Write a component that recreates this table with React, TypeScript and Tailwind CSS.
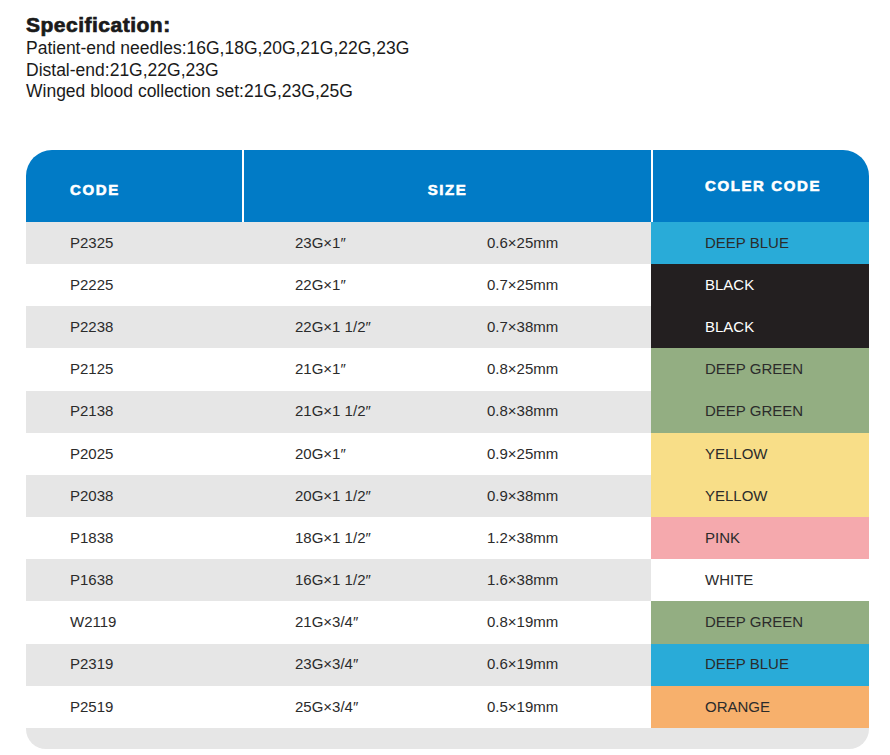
const rows = [
  { code: 'P2325', size: '23G×1″', mm: '0.6×25mm', color: 'DEEP BLUE', bg: 'bg-[#29abd8]', text: 'text-[#2b2b2b]' },
  { code: 'P2225', size: '22G×1″', mm: '0.7×25mm', color: 'BLACK', bg: 'bg-[#231f20]', text: 'text-white' },
  { code: 'P2238', size: '22G×1 1/2″', mm: '0.7×38mm', color: 'BLACK', bg: 'bg-[#231f20]', text: 'text-white' },
  { code: 'P2125', size: '21G×1″', mm: '0.8×25mm', color: 'DEEP GREEN', bg: 'bg-[#93ae82]', text: 'text-[#2b2b2b]' },
  { code: 'P2138', size: '21G×1 1/2″', mm: '0.8×38mm', color: 'DEEP GREEN', bg: 'bg-[#93ae82]', text: 'text-[#2b2b2b]' },
  { code: 'P2025', size: '20G×1″', mm: '0.9×25mm', color: 'YELLOW', bg: 'bg-[#f8de88]', text: 'text-[#2b2b2b]' },
  { code: 'P2038', size: '20G×1 1/2″', mm: '0.9×38mm', color: 'YELLOW', bg: 'bg-[#f8de88]', text: 'text-[#2b2b2b]' },
  { code: 'P1838', size: '18G×1 1/2″', mm: '1.2×38mm', color: 'PINK', bg: 'bg-[#f5a9ad]', text: 'text-[#2b2b2b]' },
  { code: 'P1638', size: '16G×1 1/2″', mm: '1.6×38mm', color: 'WHITE', bg: 'bg-white', text: 'text-[#2b2b2b]' },
  { code: 'W2119', size: '21G×3/4″', mm: '0.8×19mm', color: 'DEEP GREEN', bg: 'bg-[#93ae82]', text: 'text-[#2b2b2b]' },
  { code: 'P2319', size: '23G×3/4″', mm: '0.6×19mm', color: 'DEEP BLUE', bg: 'bg-[#29abd8]', text: 'text-[#2b2b2b]' },
  { code: 'P2519', size: '25G×3/4″', mm: '0.5×19mm', color: 'ORANGE', bg: 'bg-[#f7b06c]', text: 'text-[#2b2b2b]' }
]

export default function App() {
  return (
    <div className="w-[890px] h-[755px] bg-white pl-[26px] pt-[12.5px] font-['Liberation_Sans',Arial,sans-serif]">
      {/* Spec text */}
      <h1 className="text-[21px] leading-[24px] font-bold tracking-[0.5px] text-[#1a1a1a] [-webkit-text-stroke:0.7px_#1a1a1a]">
        Specification:
      </h1>
      <div className="mt-[1.5px] text-[17.5px] leading-[21.5px] text-[#1a1a1a]">
        <p>Patient-end needles:16G,18G,20G,21G,22G,23G</p>
        <p>Distal-end:21G,22G,23G</p>
        <p>Winged blood collection set:21G,23G,25G</p>
      </div>

      {/* Table */}
      <div className="mt-[47.5px] w-[843px] text-[15px] text-[#2b2b2b]">
        <div className="grid grid-cols-[216px_2px_407px_2px_216px] h-[72px] bg-[#017bc6] rounded-t-[26px] overflow-hidden text-white font-bold tracking-[1.6px] [-webkit-text-stroke:0.6px_white]">
          <div className="flex items-center pl-[44px] pt-[8px]">CODE</div>
          <div className="bg-white" />
          <div className="flex items-center justify-center pt-[8px]">SIZE</div>
          <div className="bg-white" />
          <div className="flex items-center pl-[52px]">COLER CODE</div>
        </div>

        {rows.map((r, i) => (
          <div
            key={r.code}
            className={`grid grid-cols-[269px_192px_164px_218px] h-[42.17px] ${i % 2 === 0 ? 'bg-[#e6e6e6]' : 'bg-white'}`}
          >
            <div className="flex items-center pl-[44px]">{r.code}</div>
            <div className="flex items-center">{r.size}</div>
            <div className="flex items-center">{r.mm}</div>
            <div className={`flex items-center pl-[54px] ${r.bg} ${r.text}`}>{r.color}</div>
          </div>
        ))}

        <div className="h-[21px] bg-[#e6e6e6] rounded-b-[20px]" />
      </div>
    </div>
  )
}
